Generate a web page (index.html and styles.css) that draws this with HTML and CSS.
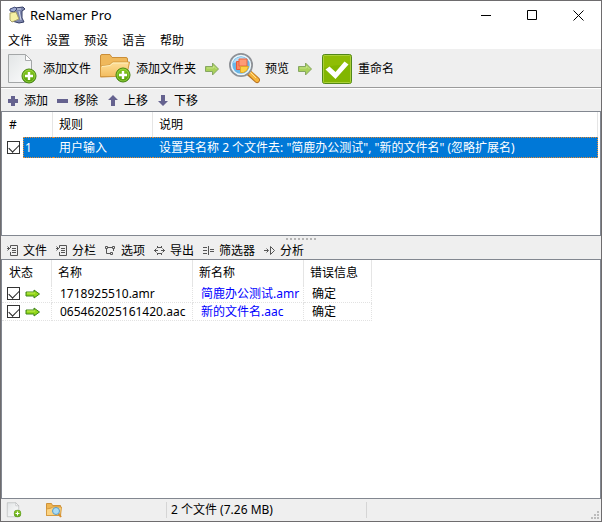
FILE: index.html
```html
<!DOCTYPE html>
<html lang="zh-CN">
<head>
<meta charset="utf-8">
<title>ReNamer Pro</title>
<link rel="stylesheet" href="styles.css">
</head>
<body>
<svg class="defs" aria-hidden="true">
  <defs>
    <linearGradient id="paper" x1="0" y1="0" x2="1" y2="1"><stop offset="0" stop-color="#e2e5e6"/><stop offset="1" stop-color="#fdfdfd"/></linearGradient>
    <linearGradient id="gold" x1="0" y1="0" x2="0" y2="1"><stop offset="0" stop-color="#ffe09a"/><stop offset="1" stop-color="#f3bd60"/></linearGradient>
    <linearGradient id="green" x1="0" y1="0" x2="0" y2="1"><stop offset="0" stop-color="#8ccc20"/><stop offset="1" stop-color="#4f9c08"/></linearGradient>
    <symbol id="plus-badge" viewBox="0 0 16 16">
      <circle cx="8" cy="8" r="7" fill="url(#green)" stroke="#3d7d0a"/>
      <circle cx="8" cy="8" r="6" fill="none" stroke="#a5da55" stroke-width=".7"/>
      <path d="M8 4v8M4 8h8" stroke="#fff" stroke-width="2.4"/>
    </symbol>
    <symbol id="add-file" viewBox="0 0 32 32">
      <path d="M2.500 1.500h17l6 6v22h-23z" fill="url(#paper)" stroke="#a3a6a7"/>
      <path d="M19.500 1.500v6h6z" fill="#fff" stroke="#aaadae"/>
      <use href="#plus-badge" x="15" y="15" width="16" height="16"/>
    </symbol>
    <symbol id="next" viewBox="0 0 16 16">
      <path d="M1.500 5.500h7v-3.500l6 6-6 6v-3.500h-7z" fill="#a9d15a" stroke="#86a662"/>
      <path d="M3 7h6.500v-2l3 3" fill="none" stroke="#c5e286"/>
    </symbol>
    <symbol id="row-arrow" viewBox="0 0 16 10">
      <path d="M1 3h8V1l5.500 4L9 9V7H1z" fill="#92d61a" stroke="#3e8518"/>
      <path d="M2 4h8" stroke="#c6ef59"/>
    </symbol>
    <symbol id="list" viewBox="0 0 11 11">
      <path d="M3.500 3V.5h7v10h-7V7M5 3.500h4M5 5.500h4M5 7.500h4M0 3.500h3M.5 1.500l2 2-2 2" fill="none" stroke="#555"/>
    </symbol>
  </defs>
</svg>

<div class="window">
  <header class="titlebar">
    <svg class="app-icon" viewBox="0 0 18 18" aria-hidden="true">
      <path d="M7 2l8-1 2 2-3 2v7l2 4-5 1-7-2z" fill="#7d86ad" stroke="#343c63"/>
      <path d="M2 3l5-2 2 2-3 3-4-1z" fill="#9da8d0" stroke="#414b77"/>
      <path d="M9 3h4M11 5l2 9" stroke="#d6dbed"/>
      <path d="M2 7l6-1 3 7-7 3-2-2z" fill="#f5f0a4" stroke="#aaa36a"/>
    </svg>
    <h1>ReNamer Pro</h1>
    <div class="window-buttons">
      <button type="button" aria-label="最小化"><svg viewBox="0 0 11 11"><path d="M0 5.500h10"/></svg></button>
      <button type="button" aria-label="最大化"><svg viewBox="0 0 11 11"><path d="M.5.5h9v9h-9z"/></svg></button>
      <button type="button" aria-label="关闭"><svg viewBox="0 0 11 11"><path d="M.5.5l10 10M10.500.5l-10 10"/></svg></button>
    </div>
  </header>

  <nav class="menu">
    <button type="button">文件</button>
    <button type="button">设置</button>
    <button type="button">预设</button>
    <button type="button">语言</button>
    <button type="button">帮助</button>
  </nav>

  <div class="main-tools">
    <button type="button"><svg class="large"><use href="#add-file"/></svg>添加文件</button>
    <button type="button">
      <svg class="large" viewBox="0 0 32 32">
        <path d="M1.500 24V3q0-1.500 1.500-1.500h8l2 3h14q1.500 0 1.500 1.500v17z" fill="#efb85b" stroke="#cb8e37"/>
        <path d="M1.500 23.500V13l9-1 3-3h17l-3 14.500z" fill="url(#gold)" stroke="#d2983f"/>
        <path d="M3 13.500l8-1 3-2.500h15" fill="none" stroke="#fff0bd"/>
        <use href="#plus-badge" x="16" y="14" width="16" height="16"/>
      </svg>添加文件夹</button>
    <svg class="step"><use href="#next"/></svg>
    <button type="button">
      <svg class="large" viewBox="0 0 32 32">
        <path d="M20 19l9 8" stroke="#b87424" stroke-width="6" stroke-linecap="round"/>
        <path d="M22 20l7 7" stroke="#f7b43b" stroke-width="4" stroke-linecap="round"/>
        <path d="M22 19l6 6" stroke="#ffe19a"/>
        <circle cx="13" cy="12" r="11" fill="#69b5e6" stroke="#8e9196" stroke-width="2"/>
        <circle cx="13" cy="12" r="9.500" fill="#69b7e8" stroke="#eef5f8" stroke-width="1.500"/>
        <path d="M5 10q2-6 8-6 4 0 6 3z" fill="#b7def5"/>
        <path d="M8.500 8.500h9v8h-9z" fill="#fa895f" stroke="#e95938"/>
        <path d="M11 6h8v7h-8z" fill="#ff9b76" stroke="#e86543"/>
        <path d="M12.500 13.500h8q-1 5-5 6h-3z" fill="#ffd044" stroke="#e1a82a"/>
      </svg>预览</button>
    <svg class="step"><use href="#next"/></svg>
    <button type="button">
      <svg class="large" viewBox="0 0 32 32">
        <rect x="1.500" y="1.500" width="29" height="29" rx="2" fill="#8fbd05" stroke="#518719"/>
        <path d="M2 15q14-4 28-3v18H2z" fill="#82b600"/>
        <rect x="2.500" y="2.500" width="27" height="27" rx="1" fill="none" stroke="#abd039"/>
        <path d="M4.500 16.500l4-3 6 5.500 9-10.500 4 3-13 14.500z" fill="#fff"/>
      </svg>重命名</button>
  </div>

  <div class="tools rule-tools">
    <button type="button"><svg viewBox="0 0 12 12"><path d="M4 1h4v3h3v4H8v3H4V8H1V4h3z"/></svg>添加</button>
    <button type="button"><svg viewBox="0 0 12 12"><path d="M0 4h11v4H0z"/></svg>移除</button>
    <button type="button"><svg viewBox="0 0 12 12"><path d="M6 0l5 5H8v6H4V5H1z"/></svg>上移</button>
    <button type="button"><svg viewBox="0 0 12 12"><path d="M6 11L1 6h3V0h4v6h3z"/></svg>下移</button>
  </div>

  <section class="panel rules">
    <table>
      <colgroup><col class="rule-check"><col class="rule-number"><col class="rule-name"><col></colgroup>
      <thead><tr><th colspan="2">#</th><th>规则</th><th>说明</th></tr></thead>
      <tbody>
        <tr><td><input type="checkbox" checked aria-label="启用规则 1"></td><td>1</td><td>用户输入</td><td>设置其名称 2 个文件去: "简鹿办公测试", "新的文件名" (忽略扩展名)</td></tr>
      </tbody>
    </table>
  </section>

  <div class="splitter"></div>

  <div class="tools file-tools">
    <button type="button"><svg><use href="#list"/></svg>文件</button>
    <button type="button"><svg><use href="#list"/></svg>分栏</button>
    <button type="button"><svg viewBox="0 0 11 11"><path d="M.5 1.500h2v2h-2zM7.500 1.500h2v2h-2zM5.500 7.500h2v2h-2zM3 2.500h4M1.500 4v4.500H5M8.500 4v2"/></svg>选项</button>
    <button type="button"><svg viewBox="0 0 11 11"><path d="M3.500 1v2M3.500 8v2M7.500 1v2M7.500 8v2M4 2.500h3M4 8.500h3M0 5.500h4M7 5.500h4M2.500 3.500l-2 2 2 2M8.500 3.500l2 2-2 2"/></svg>导出</button>
    <button type="button"><svg viewBox="0 0 11 11"><path d="M0 2.500h4M0 5.500h4M0 8.500h4M5.500 1v9M7 4.500h4M7 6.500h4"/></svg>筛选器</button>
    <button type="button"><svg viewBox="0 0 11 11"><path d="M0 5.500h4M2.500 3.500l2 2-2 2M6.500 1.500v8l4-4z"/></svg>分析</button>
  </div>

  <section class="panel files">
    <table>
      <colgroup><col class="file-status"><col class="file-name"><col class="file-new"><col class="file-error"></colgroup>
      <thead><tr><th>状态</th><th>名称</th><th>新名称</th><th>错误信息</th></tr></thead>
      <tbody>
        <tr><td><span class="status"><input type="checkbox" checked aria-label="选择 1718925510.amr"><svg><use href="#row-arrow"/></svg></span></td><td>1718925510.amr</td><td>简鹿办公测试.amr</td><td>确定</td></tr>
        <tr><td><span class="status"><input type="checkbox" checked aria-label="选择 065462025161420.aac"><svg><use href="#row-arrow"/></svg></span></td><td>065462025161420.aac</td><td>新的文件名.aac</td><td>确定</td></tr>
      </tbody>
    </table>
  </section>

  <footer class="statusbar">
    <div class="status-icons">
      <svg><use href="#add-file"/></svg>
      <svg viewBox="0 0 16 16">
        <path d="M.5 13.500v-12h5l1 2h8v10z" fill="#efb652" stroke="#ce923a"/>
        <path d="M.5 13.500V7l5-1 1-1h9l-1 8.500z" fill="#fbd382" stroke="#d49b42"/>
        <path d="M12 11l3 4" stroke="#d78d2c" stroke-width="2"/>
        <circle cx="10" cy="9" r="3.500" fill="#a9dbf5" stroke="#5a9bc4"/>
      </svg>
    </div>
    <p>2 个文件 (7.26 MB)</p>
    <svg class="grip" viewBox="0 0 8 8" aria-hidden="true"><path d="M6 0h2v2H6zM3 3h2v2H3zM6 3h2v2H6zM0 6h2v2H0zM3 6h2v2H3zM6 6h2v2H6z"/></svg>
  </footer>
</div>
</body>
</html>
```

FILE: styles.css
```css
* {
  box-sizing: border-box;
}

body {
  margin: 0;
  color: #000;
  font: 12px/16px "Noto Sans", "Noto Sans CJK SC", sans-serif;
}

.defs {
  position: absolute;
  width: 0;
  height: 0;
}

button {
  display: flex;
  align-items: center;
  padding: 0;
  border: 0;
  background: none;
  color: inherit;
  font: inherit;
  white-space: nowrap;
}

svg {
  display: block;
  flex: none;
}

.window {
  display: flex;
  flex-direction: column;
  height: 100vh;
  border: 1px solid #6e6c6e;
  background: #efefef;
}

.titlebar {
  display: flex;
  align-items: center;
  flex: none;
  height: 28px;
  padding-left: 7px;
  background: #fff;
}

.app-icon {
  width: 18px;
  height: 18px;
}

.titlebar h1 {
  margin: 0 0 0 4px;
  font-size: 13px;
  font-weight: 400;
}

.window-buttons {
  display: flex;
  align-self: stretch;
  margin-left: auto;
}

.window-buttons button {
  justify-content: center;
  width: 46px;
}

.window-buttons svg {
  width: 11px;
  height: 11px;
  fill: none;
  stroke: #000;
}

.menu {
  display: flex;
  align-items: flex-end;
  flex: none;
  gap: 14px;
  height: 20px;
  padding-left: 7px;
  background: #fff;
}

.main-tools {
  display: flex;
  align-items: center;
  flex: none;
  gap: 8px;
  height: 40px;
  padding-left: 5px;
  border-bottom: 1px solid #fff;
  box-shadow: inset 0 -1px #9b9b9b;
}

.main-tools button {
  gap: 5px;
}

.large {
  width: 32px;
  height: 32px;
}

.step {
  width: 16px;
  height: 16px;
}

.tools {
  display: flex;
  flex: none;
  gap: 9px;
  height: 22px;
  padding: 2px 0 0 6px;
}

.tools button {
  gap: 5px;
}

.rule-tools svg {
  width: 12px;
  height: 12px;
  fill: #65628f;
}

.file-tools {
  height: 19px;
}

.file-tools svg {
  width: 11px;
  height: 11px;
  fill: none;
  stroke: #555;
}

.panel {
  border: 1px solid #828790;
  background: #fff;
  overflow: hidden;
}

.rules {
  flex: none;
  height: 125px;
}

.files {
  flex: 1;
  min-height: 0;
}

.splitter {
  flex: none;
  width: 30px;
  height: 4px;
  margin: 0 auto;
  background: repeating-linear-gradient(90deg, #b4b4b4 0 2px, transparent 2px 4px) 0 2px / 100% 2px no-repeat;
}

table {
  table-layout: fixed;
  border-collapse: separate;
  border-spacing: 0;
}

th,
td {
  overflow: hidden;
  padding: 0 0 0 6px;
  font-weight: 400;
  text-align: left;
  white-space: nowrap;
}

th {
  height: 25px;
  border-right: 1px solid #e5e5e5;
}

th:first-child {
  padding-left: 7px;
}

.rules table {
  width: calc(100% - 2px);
}

.rule-check {
  width: 21px;
}

.rule-number {
  width: 30px;
}

.rule-name {
  width: 100px;
}

.rules td {
  height: 21px;
  border: dotted #e58a32;
  border-width: 1px 0;
  background: #0078d7;
  color: #fff;
}

.rules td:first-child {
  padding-left: 5px;
  border-color: transparent;
  background: none;
}

.rules td:nth-child(2) {
  padding-left: 1px;
  border-left-width: 1px;
}

.rules td:last-child {
  border-right-width: 1px;
}

.files table {
  width: 370px;
}

.file-status {
  width: 50px;
}

.file-name {
  width: 141px;
}

.file-new {
  width: 111px;
}

.file-error {
  width: 68px;
}

.files td {
  height: 18px;
  padding-left: 8px;
  border-right: 1px dotted #e2e2e2;
  border-bottom: 1px dotted #e2e2e2;
}

.files td:first-child {
  padding-left: 5px;
}

.files td:nth-child(3) {
  color: #00f;
}

input[type="checkbox"] {
  display: grid;
  place-items: center;
  width: 13px;
  height: 13px;
  margin: 0;
  border: 1px solid #333;
  background: #fff;
  appearance: none;
}

input[type="checkbox"]:checked::before {
  content: "";
  width: 9px;
  height: 5px;
  border: solid #222;
  border-width: 0 0 1px 1px;
  transform: translateY(-1px) rotate(-45deg);
}

.status {
  display: flex;
  align-items: center;
  gap: 5px;
}

.status svg {
  width: 16px;
  height: 10px;
}

.statusbar {
  display: flex;
  align-items: center;
  flex: none;
  height: 22px;
}

.status-icons {
  display: flex;
  gap: 24px;
  width: 166px;
  padding-left: 5px;
  border-right: 1px solid #d5d5d5;
}

.status-icons svg {
  width: 16px;
  height: 16px;
}

.statusbar p {
  width: 200px;
  margin: 0;
  padding-left: 4px;
  border-right: 1px solid #d5d5d5;
}

.grip {
  align-self: flex-end;
  width: 8px;
  height: 8px;
  margin: 0 2px 2px auto;
  fill: #bcbcbc;
}
```
